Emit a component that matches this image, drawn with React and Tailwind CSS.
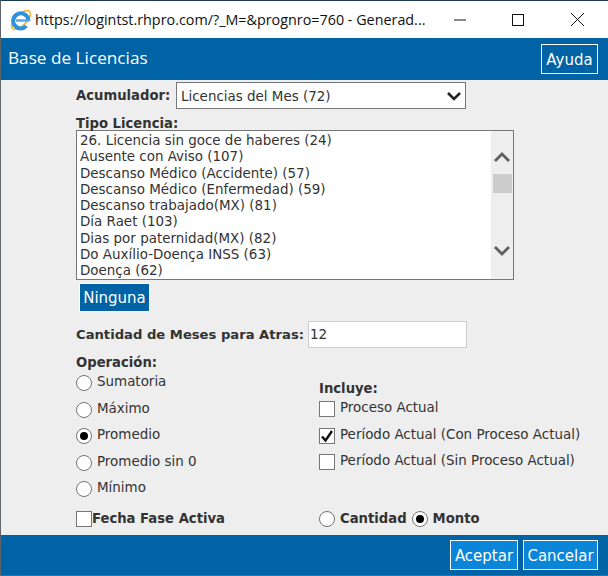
import React from 'react';

const items = [
  '26. Licencia sin goce de haberes (24)',
  'Ausente con Aviso (107)',
  'Descanso Médico (Accidente) (57)',
  'Descanso Médico (Enfermedad) (59)',
  'Descanso trabajado(MX) (81)',
  'Día Raet (103)',
  'Dias por paternidad(MX) (82)',
  'Do Auxílio-Doença INSS (63)',
  'Doença (62)',
];

const operaciones = [
  { label: 'Sumatoria' },
  { label: 'Máximo' },
  { label: 'Promedio', checked: true },
  { label: 'Promedio sin 0' },
  { label: 'Mínimo' },
];

const incluye = [
  { label: 'Proceso Actual' },
  { label: 'Período Actual (Con Proceso Actual)', checked: true },
  { label: 'Período Actual (Sin Proceso Actual)' },
];

function Radio({ checked }) {
  return (
    <span className="flex h-4 w-4 shrink-0 items-center justify-center rounded-full border border-[#767676] bg-white">
      {checked && <span className="h-2 w-2 rounded-full bg-black" />}
    </span>
  );
}

function Check({ checked }) {
  return (
    <span className="flex h-4 w-4 shrink-0 items-center justify-center border border-[#767676] bg-white">
      {checked && (
        <svg viewBox="0 0 14 14" className="h-[14px] w-[14px]">
          <path d="M2 7.5L5.5 11.5L12 2" fill="none" stroke="#111" strokeWidth="2.4" />
        </svg>
      )}
    </span>
  );
}

function IeLogo() {
  return (
    <svg viewBox="0 0 22 22" className="h-[22px] w-[22px] shrink-0">
      <ellipse cx="11" cy="11" rx="12" ry="5.5" transform="rotate(-45 11 11)" fill="none" stroke="#f2b62c" strokeWidth="1.6" />
      <path d="M18.4 11.5A7.6 7.6 0 1 0 16.4 17" fill="none" stroke="#2f90dc" strokeWidth="4" />
      <path d="M6 11.5H19.5" stroke="#4aa8ea" strokeWidth="2.4" />
    </svg>
  );
}

export default function App() {
  return (
    <div className="flex h-[576px] w-[608px] flex-col border-b border-l border-t border-b-[#5f6468] border-l-[#5f6468] border-t-[#1d3a50] bg-[#eeeeee] font-['DejaVu_Sans',sans-serif] text-[13.45px] leading-4 text-[#333]">
      {/* Title bar */}
      <div className="flex h-[37px] shrink-0 items-center bg-white pl-[9px] font-['Open_Sans',sans-serif] text-[14.35px] text-[#111]">
        <IeLogo />
        <span className="ml-[3px] w-[395px] whitespace-nowrap">
          https://logintst.rhpro.com/?_M=&amp;prognro=760 - Generad...
        </span>
        <svg viewBox="0 0 12 12" className="ml-[24px] h-3 w-3">
          <path d="M0 6H12" stroke="#111" strokeWidth="1" />
        </svg>
        <svg viewBox="0 0 12 12" className="ml-[46px] h-3 w-3">
          <rect x="0.5" y="0.5" width="11" height="11" fill="none" stroke="#111" strokeWidth="1" />
        </svg>
        <svg viewBox="0 0 13 13" className="ml-[47px] h-[13px] w-[13px]">
          <path d="M0 0L13 13M13 0L0 13" stroke="#111" strokeWidth="1" />
        </svg>
      </div>

      {/* Header */}
      <div className="flex h-[42px] shrink-0 items-center justify-between bg-[#0063a6] pl-[7px] pr-[10px] font-['Open_Sans',sans-serif] text-white">
        <span className="pb-[3px] text-[17.2px]">Base de Licencias</span>
        <button className="flex h-[30px] w-[57px] items-center justify-center border border-white bg-[#0063a6] pt-[1px] font-['DejaVu_Sans',sans-serif] text-[15px]">
          Ayuda
        </button>
      </div>

      {/* Form */}
      <div className="flex-1 pl-[75px] pt-[2px]">
        <div className="flex items-center">
          <label className="w-[100px] text-[13.2px] font-bold">Acumulador:</label>
          <div className="flex h-[27px] w-[290px] items-center justify-between border border-[#767676] bg-white pl-1 pr-1 pt-[2px]">
            <span>Licencias del Mes (72)</span>
            <svg viewBox="0 0 14 10" className="-translate-y-[1px] h-[10px] w-[14px]">
              <path d="M1 2L7 8L13 2" fill="none" stroke="#222" strokeWidth="2.6" />
            </svg>
          </div>
        </div>

        <div className="mt-[6px] pt-[2px] text-[13.2px] font-bold leading-[13px]">Tipo Licencia:</div>
        <div className="flex h-[150px] w-[438px] border border-[#767676] bg-white">
          <ul className="flex-1 pl-[3px] pt-[2px]">
            {items.map(item => (
              <li key={item} className="h-[16.25px] whitespace-nowrap leading-[16px]">{item}</li>
            ))}
          </ul>
          <div className="flex w-[22px] flex-col items-center bg-[#eeeeee] pt-[21px]">
            <svg viewBox="0 0 16 10" className="h-[10px] w-[16px]">
              <path d="M1 9L8 2L15 9" fill="none" stroke="#606060" strokeWidth="2.8" />
            </svg>
            <div className="mt-[12px] h-[19px] w-[19px] bg-[#cdcdcd]" />
            <svg viewBox="0 0 16 10" className="mt-[53px] h-[10px] w-[16px]">
              <path d="M1 1L8 8L15 1" fill="none" stroke="#606060" strokeWidth="2.8" />
            </svg>
          </div>
        </div>

        <button className="ml-[3px] mt-[3px] flex h-[29px] w-[71px] items-center justify-center border border-white bg-[#0063a6] pt-[1px] text-[15px] text-white">
          Ninguna
        </button>

        <div className="mt-[9px] flex items-center">
          <label className="w-[232px] text-[13.15px] font-bold">Cantidad de Meses para Atras:</label>
          <div className="flex h-[27px] w-[159px] items-center border border-[#cccccc] bg-white pl-[1px] pt-[1px]">12</div>
        </div>

        <div className="mt-[7px] flex">
          <div className="w-[243px]">
            <div className="mb-[5px] text-[13.2px] font-bold leading-[15px]">Operación:</div>
            {operaciones.map(op => (
              <div key={op.label} className="mb-[10.5px] flex h-4 items-center gap-[5px]">
                <Radio checked={op.checked} />
                <span className="-translate-y-[1.4px]">{op.label}</span>
              </div>
            ))}
          </div>
          <div className="pt-[19px]">
            <div className="mb-[5px] mt-[7px] text-[13.2px] font-bold leading-[15px]">Incluye:</div>
            {incluye.map(op => (
              <div key={op.label} className="mb-[10.5px] flex h-4 items-center gap-[5px]">
                <Check checked={op.checked} />
                <span className="-translate-y-[1px]">{op.label}</span>
              </div>
            ))}
          </div>
        </div>

        <div className="mt-[3px] flex text-[13.2px] font-bold">
          <div className="flex w-[243px] items-center">
            <Check />
            <span>Fecha Fase Activa</span>
          </div>
          <div className="flex items-center gap-[5px]">
            <Radio />
            <span>Cantidad</span>
            <Radio checked />
            <span>Monto</span>
          </div>
        </div>
      </div>

      {/* Footer */}
      <div className="flex h-[40px] shrink-0 items-center justify-end gap-[5px] bg-[#0063a6] pr-[10px] text-[15px] text-white">
        <button className="flex h-[30px] w-[68px] items-center justify-center border border-white bg-[#0b85d8] pt-[1px]">Aceptar</button>
        <button className="flex h-[30px] w-[75px] items-center justify-center border border-white bg-[#0b85d8] pt-[1px]">Cancelar</button>
      </div>
    </div>
  );
}
